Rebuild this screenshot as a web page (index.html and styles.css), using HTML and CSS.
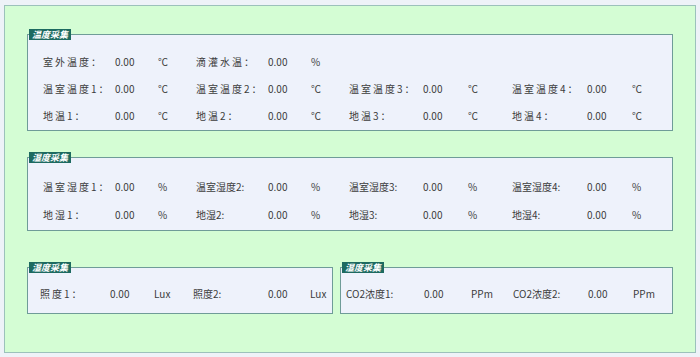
FILE: index.html
```html
<!DOCTYPE html>
<html lang="zh-CN">

<head>
    <meta charset="UTF-8">
    <title>采集</title>
    <link rel="stylesheet" href="styles.css">
</head>

<body>
    <div class="panel">
        <div class="box wide temp">
            <span class="badge">温度采集</span>
            <div class="row">
                <span class="lbl">室外温度：</span><span>0.00</span><span>℃</span>
                <span class="lbl">滴灌水温：</span><span>0.00</span><span>%</span>
            </div>
            <div class="row">
                <span class="lbl">温室温度1：</span><span>0.00</span><span>℃</span>
                <span class="lbl">温室温度2：</span><span>0.00</span><span>℃</span>
                <span class="lbl">温室温度3：</span><span>0.00</span><span>℃</span>
                <span class="lbl">温室温度4：</span><span>0.00</span><span>℃</span>
            </div>
            <div class="row">
                <span class="lbl">地温1：</span><span>0.00</span><span>℃</span>
                <span class="lbl">地温2：</span><span>0.00</span><span>℃</span>
                <span class="lbl">地温3：</span><span>0.00</span><span>℃</span>
                <span class="lbl">地温4：</span><span>0.00</span><span>℃</span>
            </div>
        </div>

        <div class="box wide humi">
            <span class="badge">湿度采集</span>
            <div class="row">
                <span class="lbl">温室湿度1：</span><span>0.00</span><span>%</span>
                <span>温室湿度2:</span><span>0.00</span><span>%</span>
                <span>温室湿度3:</span><span>0.00</span><span>%</span>
                <span>温室湿度4:</span><span>0.00</span><span>%</span>
            </div>
            <div class="row">
                <span class="lbl">地湿1：</span><span>0.00</span><span>%</span>
                <span>地湿2:</span><span>0.00</span><span>%</span>
                <span>地湿3:</span><span>0.00</span><span>%</span>
                <span>地湿4:</span><span>0.00</span><span>%</span>
            </div>
        </div>

        <div class="pair">
            <div class="box light">
                <span class="badge">湿度采集</span>
                <div class="row">
                    <span class="lbl">照度1：</span><span>0.00</span><span>Lux</span>
                    <span>照度2:</span><span>0.00</span><span>Lux</span>
                </div>
            </div>
            <div class="box co2">
                <span class="badge">湿度采集</span>
                <div class="row">
                    <span>CO2浓度1:</span><span>0.00</span><span>PPm</span>
                    <span>CO2浓度2:</span><span>0.00</span><span>PPm</span>
                </div>
            </div>
        </div>
    </div>
</body>

</html>
```

FILE: styles.css
```css
body {
    margin: 0;
    background-color: #eef2f8;
    font-family: "Noto Sans CJK SC", "Noto Sans", sans-serif;
    font-size: 10px;
    color: #3c3c3c;
}

.panel {
    margin: 5px 4px 0;
    height: 348px;
    box-sizing: border-box;
    border: 1px solid #9cc1bb;
    background-color: #d4fdd4;
    padding: 28px 22px 0;
}

.box {
    position: relative;
    border: 1px solid #6f9c98;
    background-color: #eef2fb;
    box-sizing: border-box;
}

.badge {
    position: absolute;
    top: -6px;
    left: 1px;
    height: 11px;
    line-height: 11px;
    padding: 0 3px;
    background-color: #1d6a60;
    color: #fff;
    font-size: 9px;
    font-style: italic;
    font-weight: bold;
}

.row {
    display: grid;
    align-items: center;
    white-space: nowrap;
}

.lbl {
    letter-spacing: 2px;
}

.wide .row {
    grid-template-columns: 72px 43px 38px 72px 43px 38px 74px 45px 44px 75px 45px auto;
}

.temp {
    height: 97px;
    padding: 13px 0 0 15px;
    margin-bottom: 26px;
}

.temp .row {
    height: 27px;
}

.humi {
    height: 74px;
    padding: 14px 0 0 15px;
    margin-bottom: 36px;
}

.humi .row {
    height: 28px;
}

.pair {
    display: grid;
    grid-template-columns: 306px 1fr;
    gap: 7px;
}

.pair .box {
    height: 47px;
    padding-top: 12px;
}

.pair .row {
    height: 26px;
}

.light {
    padding-left: 12px;
}

.light .row {
    grid-template-columns: 70px 44px 39px 75px 42px auto;
}

.co2 {
    padding-left: 5px;
}

.co2 .row {
    grid-template-columns: 78px 47px 42px 75px 45px auto;
}
```
